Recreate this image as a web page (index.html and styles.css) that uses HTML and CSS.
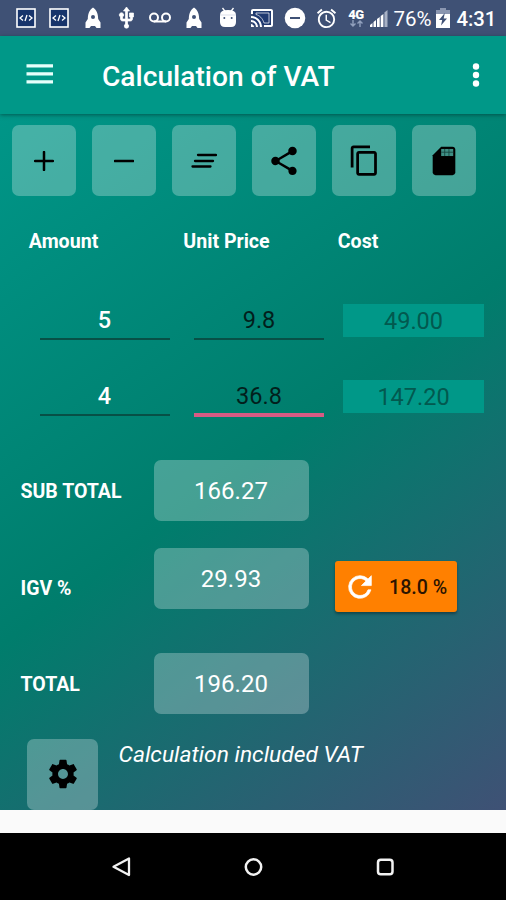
FILE: index.html
```html
<!DOCTYPE html>
<html lang="en">
<head>
<meta charset="utf-8">
<title>Calculation of VAT</title>
<link rel="stylesheet" href="styles.css">
</head>
<body>
<div class="screen">
  <header class="status">
    <div class="notices">
      <svg width="22" height="22" viewBox="0 0 22 22"><rect x="2" y="2" width="18" height="18" fill="#17346b" stroke="#fff" stroke-width="1.6"/><path d="M8 8.500 5 11l3 2.500M14 8.500 17 11l-3 2.500M12 8l-2 6" fill="none" stroke="#fff" stroke-width="1.300"/></svg>
      <svg width="22" height="22" viewBox="0 0 22 22"><rect x="2" y="2" width="18" height="18" fill="#17346b" stroke="#fff" stroke-width="1.6"/><path d="M8 8.500 5 11l3 2.500M14 8.500 17 11l-3 2.500M12 8l-2 6" fill="none" stroke="#fff" stroke-width="1.300"/></svg>
      <svg width="22" height="22" viewBox="0 0 22 22"><path fill="#fff" fill-rule="evenodd" d="M11 .5C7.500 3 6 6 5.800 12L3.500 15.500V21h4l1.500-2h4l1.500 2h4v-5.500L16.200 12C16 6 14.500 3 11 .5zM11 8a2 2 0 1 1 0 4 2 2 0 0 1 0-4z"/></svg>
      <svg width="25" height="24" viewBox="0 0 24 24"><path fill="#fff" stroke="#fff" stroke-width=".7" d="M15 7v4h1v2h-3V5h2l-3-4-3 4h2v8H8v-2.070c.7-.37 1.200-1.080 1.200-1.930 0-1.210-.99-2.200-2.200-2.200S4.800 7.790 4.800 9c0 .85.5 1.560 1.200 1.930V13c0 1.110.89 2 2 2h3v3.050c-.71.37-1.200 1.100-1.200 1.950a2.200 2.200 0 0 0 4.400 0c0-.85-.49-1.580-1.200-1.950V15h3c1.110 0 2-.89 2-2v-2h1V7h-4z"/></svg>
      <svg width="24" height="20" viewBox="0 0 24 20"><g fill="none" stroke="#fff" stroke-width="2"><circle cx="6" cy="9.500" r="4"/><circle cx="18" cy="9.500" r="4"/><path d="M6 13.500h12"/></g></svg>
      <svg width="22" height="22" viewBox="0 0 22 22"><path fill="#fff" fill-rule="evenodd" d="M11 .5C7.500 3 6 6 5.800 12L3.500 15.500V21h4l1.500-2h4l1.500 2h4v-5.500L16.200 12C16 6 14.500 3 11 .5zM11 8a2 2 0 1 1 0 4 2 2 0 0 1 0-4z"/></svg>
      <svg class="droid" width="20" height="22" viewBox="0 0 20 22"><path d="m4.500 1 3 4M15.500 1l-3 4" stroke="#fff" stroke-width="1.300"/><path d="M2 8q0-5 8-5t8 5v7q0 5-5 5H7q-5 0-5-5z" fill="#fff"/><path d="M2 8h16" stroke="#c3cbdb" stroke-width=".6"/><circle cx="6.300" cy="11" r="1" fill="#3f5175"/><circle cx="13.700" cy="11" r="1" fill="#3f5175"/></svg>
      <svg class="cast" width="24" height="24" viewBox="0 0 24 24"><path d="M3 5h18v14H3z" fill="#203a70"/><path fill="#fff" d="M1 18v3h3c0-1.660-1.340-3-3-3zm0-4v2c2.760 0 5 2.240 5 5h2c0-3.870-3.130-7-7-7zm0-4v2c4.970 0 9 4.030 9 9h2c0-6.080-4.930-11-11-11zM21 3H3c-1.100 0-2 .9-2 2v3h2V5h18v14h-7v2h7c1.100 0 2-.9 2-2V5c0-1.100-.9-2-2-2z"/><path d="M6 7h13v10h-5C12.500 12 9.500 9.500 6 8.500z" fill="none" stroke="#fff" stroke-width=".7"/></svg>
      <svg width="22" height="22" viewBox="0 0 22 22"><circle cx="11" cy="11" r="10.300" fill="#fff"/><path d="M6 11h10" stroke="#3f5175" stroke-width="2"/></svg>
      <svg class="alarm" width="23" height="23" viewBox="0 0 24 24"><path fill="#fff" d="m22 5.720-4.600-3.860-1.290 1.530 4.600 3.860L22 5.720zM7.880 3.390 6.600 1.860 2 5.710l1.290 1.530 4.590-3.850zM12.500 8H11v6l4.750 2.850.75-1.230-4-2.370V8zM12 4c-4.970 0-9 4.030-9 9s4.020 9 9 9a9 9 0 0 0 0-18zm0 16c-3.870 0-7-3.130-7-7s3.130-7 7-7 7 3.130 7 7-3.130 7-7 7z"/></svg>
    </div>
    <div class="network"><span>4G</span><svg width="16" height="7" viewBox="0 0 16 7"><path d="M5 0v6M2.500 3.500 5 6l2.500-2.500M12 7V1M9.500 3.500 12 1l2.500 2.500" fill="none" stroke="#91a0bd" stroke-width="1.400"/></svg></div>
    <svg class="signal" width="20" height="19" viewBox="0 0 20 19"><path fill="#fff" d="M1 18v-2l2.500-2v4zM4.500 18v-5l2.500-2v7zM8 18v-8l2.700-2v10zM11.700 18V7l2.700-2v13z"/><path fill="#a7b1c5" d="M15.400 18V3.500L18.500 1v17z"/></svg>
    <span class="percent">76%</span>
    <svg class="battery" width="14" height="20" viewBox="0 0 14 20"><path d="M4 0h6v2h4v5H0V2h4z" fill="#8a96b0"/><path d="M0 6h14v14H0z" fill="#fff"/><path d="M8.800 5 3 12h3.200L5 17.500l6-7H7.700z" fill="#3f5175"/></svg>
    <span class="clock">4:31</span>
  </header>

  <div class="appbar">
    <svg class="menu" width="27" height="20" viewBox="0 0 27 20"><path d="M.5 1.800H27M.5 9.800H27M.5 17.800H27" stroke="#e6fffb" stroke-width="3.200"/></svg>
    <h1>Calculation of VAT</h1>
    <svg class="more" width="8" height="24" viewBox="0 0 8 24"><g fill="#fff"><circle cx="4" cy="3.500" r="3.200"/><circle cx="4" cy="12" r="3.200"/><circle cx="4" cy="20.500" r="3.200"/></g></svg>
  </div>

  <main class="content">
    <div class="tools">
      <button class="tile"><svg width="20" height="20" viewBox="0 0 20 20"><path d="M10 1v18M1 10h18" fill="none" stroke="#000" stroke-width="2.500" stroke-linecap="round"/></svg></button>
      <button class="tile"><svg width="20" height="20" viewBox="0 0 20 20"><path d="M1 10h18" fill="none" stroke="#000" stroke-width="2.600" stroke-linecap="round"/></svg></button>
      <button class="tile"><svg width="26" height="16" viewBox="0 0 26 16"><path d="M7 2h18M4 8h18M1.500 13.500h18" fill="none" stroke="#000" stroke-width="2.300" stroke-linecap="round"/></svg></button>
      <button class="tile"><svg width="34" height="34" viewBox="0 0 24 24"><path d="M18 16.080c-.76 0-1.440.3-1.960.77L8.910 12.700c.05-.23.09-.46.09-.7s-.04-.47-.09-.7l7.050-4.110c.54.5 1.250.81 2.040.81 1.660 0 3-1.340 3-3s-1.340-3-3-3-3 1.340-3 3c0 .24.04.47.09.7L8.040 9.810C7.500 9.310 6.790 9 6 9c-1.660 0-3 1.340-3 3s1.340 3 3 3c.79 0 1.500-.31 2.040-.81l7.120 4.160c-.05.21-.08.43-.08.65 0 1.610 1.310 2.920 2.920 2.920s2.920-1.310 2.920-2.920-1.310-2.920-2.920-2.920z"/></svg></button>
      <button class="tile"><svg width="33" height="33" viewBox="0 0 24 24"><path d="M16 1H4c-1.100 0-2 .9-2 2v14h2V3h12V1zm3 4H8c-1.100 0-2 .9-2 2v14c0 1.100.9 2 2 2h11c1.100 0 2-.9 2-2V7c0-1.100-.9-2-2-2zm0 16H8V7h11v14z"/></svg></button>
      <button class="tile"><svg width="34" height="34" viewBox="0 0 24 24"><path d="M18 2h-8L4.020 8 4 20c0 1.100.9 2 2 2h12c1.100 0 2-.9 2-2V4c0-1.100-.9-2-2-2z"/><path d="M10 3.500h8.500v5H10z" fill="#3f8f85"/><path d="M12.500 3.500v5M15.500 3.500v5M10 5.800h8.500" stroke="#16433d" stroke-width=".6"/></svg></button>
    </div>

    <div class="heads"><span>Amount</span><span>Unit Price</span><span>Cost</span></div>

    <div class="line">
      <span class="field amount">5</span><span class="field">9.8</span><span class="cost">49.00</span>
    </div>
    <div class="line">
      <span class="field amount">4</span><span class="field active">36.8</span><span class="cost">147.20</span>
    </div>

    <div class="sum subtotal"><span class="label">SUB TOTAL</span><span class="value">166.27</span></div>
    <div class="sum tax"><span class="label">IGV %</span><span class="value">29.93</span>
      <button class="rate"><svg width="34" height="34" viewBox="0 0 24 24"><path fill="#fff" stroke="#fff" stroke-width=".5" d="M17.650 6.350A7.958 7.958 0 0 0 12 4a8 8 0 1 0 7.730 10h-2.080A5.990 5.990 0 0 1 12 18c-3.310 0-6-2.690-6-6s2.690-6 6-6c1.660 0 3.140.69 4.220 1.780L13 11h7V4l-2.350 2.350z"/></svg><span>18.0 %</span></button>
    </div>
    <div class="sum total"><span class="label">TOTAL</span><span class="value">196.20</span></div>

    <div class="footer">
      <button class="tile gear"><svg width="34" height="34" viewBox="0 0 24 24"><path d="M19.430 12.980c.04-.32.070-.64.070-.98s-.03-.66-.07-.98l2.110-1.650c.19-.15.24-.42.12-.64l-2-3.460c-.12-.22-.39-.3-.61-.22l-2.490 1c-.52-.4-1.080-.73-1.690-.98l-.38-2.650A.488.488 0 0 0 14 2h-4c-.25 0-.46.18-.49.42l-.38 2.650c-.61.25-1.170.59-1.690.98l-2.490-1c-.23-.09-.49 0-.61.22l-2 3.460c-.13.22-.07.49.12.640l2.110 1.650c-.04.32-.07.65-.07.98s.03.66.07.98l-2.110 1.650c-.19.15-.24.42-.12.64l2 3.460c.12.22.39.3.61.22l2.490-1c.52.4 1.080.73 1.690.98l.38 2.650c.03.24.24.42.49.42h4c.25 0 .46-.18.49-.42l.38-2.650c.61-.25 1.170-.59 1.690-.98l2.490 1c.23.09.49 0 .61-.22l2-3.460c.12-.22.07-.49-.12-.64l-2.110-1.650zM12 15.500c-1.930 0-3.500-1.570-3.500-3.500s1.570-3.500 3.500-3.500 3.500 1.570 3.500 3.500-1.570 3.500-3.500 3.500z"/></svg></button>
      <em>Calculation included VAT</em>
    </div>
  </main>

  <div class="strip"></div>
  <nav class="nav">
    <svg width="20" height="22" viewBox="0 0 20 22"><path d="M18 2.500v16.500L2.500 10.800z" fill="none" stroke="#f2f2f2" stroke-width="2.300" stroke-linejoin="round"/></svg>
    <svg width="20" height="20" viewBox="0 0 20 20"><circle cx="10.500" cy="10" r="7.700" fill="none" stroke="#f2f2f2" stroke-width="2.500"/></svg>
    <svg width="20" height="20" viewBox="0 0 20 20"><rect x="3" y="2.700" width="14.500" height="14.500" rx="2.800" fill="none" stroke="#f2f2f2" stroke-width="2.500"/></svg>
  </nav>
</div>
</body>
</html>
```
FILE: styles.css
```css
* { box-sizing: border-box; }
body { margin: 0; font-family: Roboto, "Liberation Sans", sans-serif; color: #fff; }
svg { display: block; flex: none; }
button { border: 0; padding: 0; font: inherit; }
span, em, h1 { white-space: nowrap; line-height: 1; }

.screen { width: 506px; height: 900px; display: flex; flex-direction: column; overflow: hidden; }

.status { height: 36px; flex: none; background: #3f5175; display: flex; align-items: center; padding-left: 9px; }
.notices { display: grid; grid-template-columns: repeat(10, 33.6px); place-items: center; }
.notices .alarm { margin-right: 4px; }
.notices .droid { margin-left: 2px; }
.notices .cast { margin-left: 2px; }
.network { width: 18px; margin-left: 2px; display: flex; flex-direction: column; align-items: center; }
.network span { font-size: 13px; font-weight: 900; line-height: 10px; letter-spacing: -.5px; }
.signal { margin-left: 4px; }
.percent { font-size: 20.500px; margin-left: 4.500px; width: 42px; padding-top: 2px; }
.battery { margin-left: 1px; }
.clock { font-size: 20.300px; font-weight: 500; margin-left: 6px; padding-top: 2px; }

.appbar { height: 78px; flex: none; background: #009888; display: flex; align-items: center; padding: 0 26px; position: relative; box-shadow: 0 1px 4px rgba(0, 50, 45, .6); }
.menu { margin-bottom: 2px; }
.appbar h1 { margin: 5px auto 0 49px; font-size: 28.150px; font-weight: 500; }
.more { margin-bottom: 1px; }

.content { height: 696px; flex: none; padding-top: 11px; background: linear-gradient(144deg, #009688 0%, #007d6c 50%, #3f5175 100%); }
.tools { display: flex; gap: 16.200px; padding-left: 11.500px; }
.tile { width: 64px; height: 71px; border-radius: 7px; background: rgba(255, 255, 255, .27); display: flex; align-items: center; justify-content: center; }

.heads { display: grid; grid-template-columns: 154.500px 154.500px 1fr; margin: 36px 0 52.400px; padding-left: 28.800px; font-size: 19.600px; font-weight: 700; }

.line { height: 76px; display: grid; grid-template-columns: 130px 130px 141px; column-gap: 24.500px; padding-left: 39.500px; align-items: start; font-size: 23.500px; text-align: center; color: #021f1c; }
.field { height: 36px; line-height: 32px; border-bottom: 2px solid #075046; }
.amount { color: #fff; font-weight: 500; }
.active { height: 37px; border-bottom: 4px solid #d75b84; }
.cost { width: 141px; height: 33px; line-height: 34px; margin-left: -5.500px; background: #009888; color: #02594f; }

.sum { display: flex; align-items: center; height: 61px; padding-left: 20.500px; }
.label { width: 133px; font-size: 19.500px; font-weight: 700; padding-top: 3px; }
.value { width: 155px; height: 61px; line-height: 62px; border-radius: 7px; background: rgba(255, 255, 255, .27); text-align: center; font-size: 24px; }
.subtotal { margin-top: 4px; }
.tax { margin-top: 27px; }
.tax .label { padding-top: 20px; }
.total { margin-top: 44px; }
.rate { width: 122px; height: 51px; margin: 17px 0 0 26px; padding-left: 8px; border-radius: 3px; background: #ff8000; color: #2b1400; display: flex; align-items: center; box-shadow: 0 2px 3px rgba(0, 0, 0, .35); }
.rate span { margin-left: 12.500px; font-size: 19.600px; font-weight: 500; padding-top: 2px; }

.footer { display: flex; align-items: flex-start; margin-top: 25px; padding-left: 27px; }
.gear { width: 71px; }
.footer em { margin: 5px 0 0 20.500px; font-size: 22.800px; }

.strip { height: 23px; flex: none; background: #fafafa; }
.nav { height: 67px; flex: none; background: #000; display: flex; justify-content: center; align-items: center; gap: 112px; }
```
